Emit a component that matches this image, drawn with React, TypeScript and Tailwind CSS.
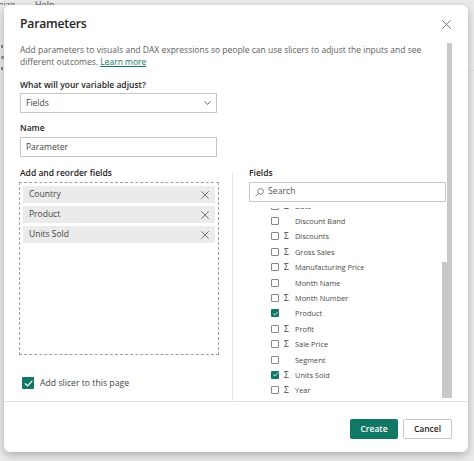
import React from "react";

const FONT = "font-['Open_Sans',sans-serif]";

function Box({ checked, size = 8 }: { checked?: boolean; size?: number }) {
  if (checked) {
    return (
      <span
        className="flex items-center justify-center rounded-[1px] bg-[#117865]"
        style={{ width: size, height: size }}
      >
        <svg viewBox="0 0 12 12" width={size - 1} height={size - 1} fill="none">
          <path d="M2.5 6.3 L5 8.6 L9.8 3.4" stroke="white" strokeWidth="1.4" strokeLinecap="round" strokeLinejoin="round" />
        </svg>
      </span>
    );
  }
  return (
    <span
      className="block rounded-[1px] border border-[#8a8886] bg-white"
      style={{ width: size, height: size }}
    />
  );
}

function XIcon({ size, color = "#444" }: { size: number; color?: string }) {
  return (
    <svg width={size} height={size} viewBox="0 0 10 10" fill="none">
      <path d="M0.7 0.7 L9.3 9.3 M9.3 0.7 L0.7 9.3" stroke={color} strokeWidth="0.9" strokeLinecap="round" />
    </svg>
  );
}

const fields: { name: string; sigma: boolean; checked?: boolean }[] = [
  { name: "Date", sigma: true },
  { name: "Discount Band", sigma: false },
  { name: "Discounts", sigma: true },
  { name: "Gross Sales", sigma: true },
  { name: "Manufacturing Price", sigma: true },
  { name: "Month Name", sigma: false },
  { name: "Month Number", sigma: true },
  { name: "Product", sigma: false, checked: true },
  { name: "Profit", sigma: true },
  { name: "Sale Price", sigma: true },
  { name: "Segment", sigma: false },
  { name: "Units Sold", sigma: true, checked: true },
  { name: "Year", sigma: true },
];

export default function App() {
  return (
    <div className={`${FONT} relative h-[461px] w-[474px] overflow-hidden bg-[#ececec]`}>
      {/* background app fragments */}
      <div className="flex h-[5px] items-end overflow-hidden text-[9px] leading-[10px] text-[#555]">
        <span className="ml-[-2px] mb-[-5px]">nize</span>
        <span className="ml-[20px] mb-[-5px]">Help</span>
      </div>
      <div className="flex h-[456px]">
        <div className="mt-[40px] ml-[1px] flex h-[40px] w-[3px] flex-col gap-[8px]">
          <span className="block h-[3px] w-[2px] bg-[#888]" />
          <span className="block h-[3px] w-[3px] bg-[#999]" />
          <span className="block h-[3px] w-[2px] bg-[#888]" />
        </div>
        <div className="ml-auto mt-[65px] h-[1px] w-[6px] bg-[#dedede]" />
      </div>

      {/* dialog */}
      <div className="absolute left-[4px] top-[5px] flex h-[447px] w-[464px] flex-col rounded-[6px] bg-white shadow-[0_3px_10px_rgba(0,0,0,0.28)]">
        {/* header */}
        <div className="flex h-[38px] shrink-0 items-start pl-[16px] pr-[17px] pt-[9px]">
          <h1 className="text-[12.2px] font-semibold leading-[20px] tracking-[-0.2px] text-[#252423]">Parameters</h1>
          <button className="ml-auto mt-[6px]">
            <XIcon size={9} color="#555" />
          </button>
        </div>

        {/* body */}
        <div className="flex h-[358px] shrink-0 pl-[16px] pr-[16px]">
          <div className="flex min-h-0 w-[427px] flex-col">
            <p className="mt-[1px] shrink-0 text-[8.5px] leading-[12px] text-[#605e5c]">
              Add parameters to visuals and DAX expressions so people can use slicers to adjust the inputs and see
              <br />
              different outcomes.{" "}
              <a className="text-[#117865] underline" href="#">
                Learn more
              </a>
            </p>

            <label className="mt-[11px] shrink-0 text-[8.5px] font-semibold leading-[12px] text-[#252423]">
              What will your variable adjust?
            </label>
            <div className="mt-[2px] flex h-[20px] w-[197px] shrink-0 items-center border border-[#c8c6c4] pl-[5px] pr-[5px] text-[8.5px] text-[#444]">
              <span>Fields</span>
              <svg className="ml-auto" width="7" height="4" viewBox="0 0 7 4" fill="none">
                <path d="M0.5 0.5 L3.5 3.3 L6.5 0.5" stroke="#555" strokeWidth="0.9" />
              </svg>
            </div>

            <label className="mt-[9px] shrink-0 text-[8.5px] font-semibold leading-[12px] text-[#252423]">Name</label>
            <div className="mt-[3px] flex h-[20px] w-[197px] shrink-0 items-center border border-[#c8c6c4] pl-[5px] text-[8.5px] text-[#444]">
              Parameter
            </div>

            <div className="mt-[10px] flex min-h-0 flex-1">
              {/* left column */}
              <div className="flex w-[199px] flex-col">
                <label className="shrink-0 text-[8.5px] font-semibold leading-[12px] text-[#252423]">Add and reorder fields</label>
                <div className="ml-[-1px] mt-[3px] flex h-[173px] w-[200px] shrink-0 flex-col gap-[3px] border border-dashed border-[#a19f9d] px-[3px] pt-[3px]">
                  {["Country", "Product", "Units Sold"].map((f) => (
                    <div key={f} className="flex h-[17px] shrink-0 items-center bg-[#ebebeb] pl-[6px] pr-[6px] text-[8.5px] text-[#444]">
                      <span>{f}</span>
                      <span className="ml-auto flex">
                        <XIcon size={8} color="#444" />
                      </span>
                    </div>
                  ))}
                </div>
                <div className="ml-[2px] mt-[22px] flex h-[12px] shrink-0 items-center gap-[6px]">
                  <Box checked size={12} />
                  <span className="text-[8.7px] leading-[12px] text-[#444]">Add slicer to this page</span>
                </div>
              </div>

              {/* divider */}
              <div className="ml-[13px] mt-[5px] w-[1px] bg-[#e6e6e6]" />

              {/* right column */}
              <div className="ml-[16px] flex min-h-0 w-[198px] flex-col">
                <label className="shrink-0 text-[8.5px] font-semibold leading-[12px] text-[#252423]">Fields</label>
                <div className="mt-[3px] flex h-[20px] w-[197px] shrink-0 items-center gap-[4px] border border-[#c8c6c4] pl-[5px] text-[8.7px] text-[#555]">
                  <svg width="9" height="9" viewBox="0 0 10 10" fill="none">
                    <circle cx="6.2" cy="3.8" r="3.1" stroke="#666" strokeWidth="0.9" />
                    <path d="M4 6 L0.8 9.2" stroke="#666" strokeWidth="0.9" strokeLinecap="round" />
                  </svg>
                  <span>Search</span>
                </div>
                <div className="mt-[6px] flex min-h-0 flex-1 overflow-hidden">
                  <div className="min-h-0 flex-1 overflow-hidden">
                    <div className="mt-[-10px] flex flex-col">
                      {fields.map((f) => (
                        <div key={f.name} className="flex h-[15.4px] shrink-0 items-center">
                          <span className="ml-[22px] flex">
                            <Box checked={f.checked} />
                          </span>
                          <span className="ml-[5px] w-[11px] text-[8.5px] leading-[10px] text-[#444]">{f.sigma ? "Σ" : ""}</span>
                          <span className="text-[7.4px] leading-[10px] text-[#4a4a4a]">{f.name}</span>
                        </div>
                      ))}
                    </div>
                  </div>
                  <div className="w-[5px] shrink-0">
                    <div className="mt-[54px] h-[136px] bg-[#c8c8c8]" />
                  </div>
                </div>
              </div>
            </div>
          </div>
          {/* outer scrollbar */}
          <div className="h-[355px] w-[5px] shrink-0 bg-[#c8c8c8]" />
        </div>

        {/* footer */}
        <div className="flex flex-1 justify-end gap-[5px] border-t border-[#e1e1e1] pr-[16px] pt-[17px]">
          <button className="h-[20px] w-[48px] rounded-[2px] bg-[#117865] text-[8.5px] font-semibold text-white">Create</button>
          <button className="h-[20px] w-[49px] rounded-[2px] border border-[#c8c6c4] bg-white text-[8.5px] font-semibold text-[#252423]">
            Cancel
          </button>
        </div>
      </div>
    </div>
  );
}
